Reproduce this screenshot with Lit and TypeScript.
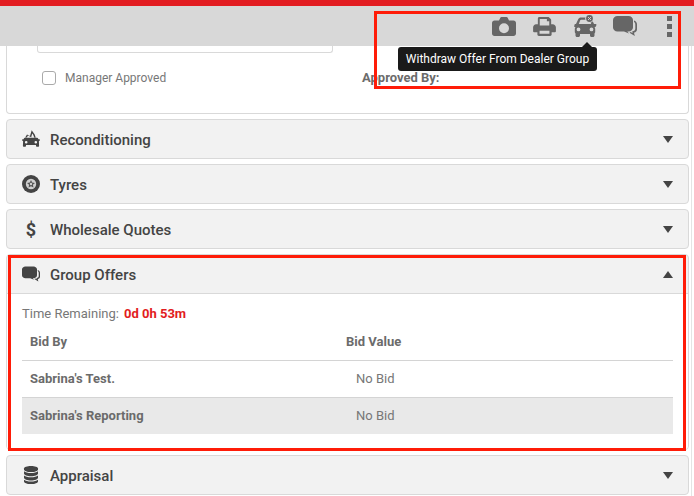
import { LitElement, html, css, svg } from "lit";
import { customElement } from "lit/decorators.js";

const carBody = svg`<path d="M5 10 7.2 5.2C7.8 4 8.8 3.4 10 3.4h8c1.2 0 2.2.6 2.8 1.8L23 10h1.6c.6 0 1 .5.8 1l-.4 1.2c-.1.4-.5.7-.9.7h-.6c.5.6.7 1.2.7 2v3.2c0 .6-.3 1.100-.7 1.500V21.500c0 .8-.7 1.500-1.500 1.500h-1.500c-.8 0-1.500-.7-1.500-1.500V20H9v1.500c0 .8-.7 1.500-1.500 1.500H6c-.8 0-1.500-.7-1.500-1.500v-2.100c-.4-.4-.7-.9-.7-1.500V14.900c0-.8.200-1.400.7-2h-.6c-.4 0-.8-.3-.9-.7L3.600 11c-.2-.5.2-1 .8-1ZM7.800 10h12.400L18.800 6.300c-.2-.4-.5-.6-.9-.6h-7.800c-.4 0-.7.2-.9.6ZM7.500 13.500a1.900 1.900 0 1 0 0 3.800 1.900 1.900 0 0 0 0-3.800Zm13 0a1.900 1.900 0 1 0 0 3.800 1.900 1.900 0 0 0 0-3.800Z" fill-rule="evenodd"/>`;

const commentPaths = svg`
  <path d="M4.500 0h11C18 0 20 1.800 20 4v7.500c0 2.200-2 4-4.500 4h-1.200l1.700 2-5-2H4.500C2 15.500 0 13.700 0 11.500V4C0 1.800 2 0 4.500 0Z"/>
  <path d="M21 4.500c1.800.5 3 2 3 3.900v4.800c0 1.900-1.200 3.200-3 3.500l.8 3.300-5.300-3.200 1-.9 2.100 1.200-.3-1.900c2 0 3-.9 3-2.600V8.400c0-1.100-.6-1.900-1.300-2.300Z"/>`;

const icons = {
  camera: html`<svg class="ti cam" viewBox="0 0 24 19"><path fill-rule="evenodd" d="M2.500 3.500H7L8.200.9C8.400.4 8.900 0 9.500 0h5c.6 0 1.100.4 1.300.9L17 3.500h4.500C22.900 3.500 24 4.600 24 6v10.500c0 1.400-1.100 2.500-2.500 2.500h-19C1.100 19 0 17.900 0 16.500V6c0-1.400 1.100-2.500 2.500-2.500ZM12 6.200a5 5 0 1 0 0 10 5 5 0 0 0 0-10Z"/></svg>`,
  printer: html`<svg class="ti prn" viewBox="0 0 24 20"><path fill-rule="evenodd" d="M5 1.500C5 .7 5.700 0 6.500 0h9.300c.4 0 .8.200 1.100.4l1.700 1.800c.3.300.4.600.4 1V7.500h1.500C22.500 7.500 24 9 24 10.700v4.300c0 .6-.4 1-1 1h-3.500v2.500c0 .8-.7 1.500-1.500 1.500H6c-.8 0-1.500-.7-1.500-1.500V16H1c-.6 0-1-.4-1-1v-4.300C0 9 1.500 7.500 3.200 7.500H5ZM7 2v7h10V4.500h-2.500V2ZM6.800 14.500v3h10.400v-3Z"/></svg>`,
  car: html`<svg class="ti car" viewBox="0 0 24 22"><g transform="translate(-2 -1)">${carBody}</g><circle cx="16.500" cy="3.500" r="4.300" fill="#d8d8d8"/><circle cx="16.500" cy="3.500" r="3.400" fill="#666"/><path d="m15 2 3 3m0-3-3 3" stroke="#d8d8d8" stroke-width=".9"/></svg>`,
  comments: html`<svg class="ti com" viewBox="0 0 24 20">${commentPaths}</svg>`,
  recon: html`<svg class="ai" viewBox="0 0 18 18"><path fill-rule="evenodd" d="M3.200 7.500 5 4.600l3 1.500L9.700.3l3 4.300 1 2.900h-1.500l-1-2.700-1-1.300-1 3.800-3.300-1.700-.9 1.700ZM3 7.800h12c.6 0 1 .3 1.100.7l.3.8h.9c.4 0 .7.400.6.800l-.3.600c-.1.300-.4.500-.7.500l.2 4.500c0 .6-.4 1-1 1h-1.100c-.5 0-1-.4-1-1v-.6H4v.6c0 .6-.5 1-1 1H1.900c-.6 0-1-.4-1-1l.2-4.500c-.3 0-.6-.2-.7-.5l-.3-.6c-.1-.4.2-.8.6-.8h.9l.3-.8c.1-.4.500-.7 1.100-.7ZM4.200 11a1.300 1.300 0 1 0 0 2.600 1.300 1.300 0 0 0 0-2.600Zm9.600 0a1.300 1.300 0 1 0 0 2.600 1.300 1.300 0 0 0 0-2.600Z"/></svg>`,
  tyre: html`<svg class="ai" viewBox="0 0 18 18"><circle cx="9" cy="9" r="9"/><circle cx="9" cy="9" r="5.200" fill="#cfcfcf"/><path d="m9 5 1.200 2.600 2.800.3-2.100 1.900.6 2.800L9 11.200l-2.500 1.400.6-2.800L5 7.900l2.800-.3Z" fill="#555"/><circle cx="9" cy="9" r="1.200" fill="#cfcfcf"/></svg>`,
  dollar: html`<svg class="ai" viewBox="0 0 18 18"><text class="dollar" x="9" y="15.500" text-anchor="middle">$</text></svg>`,
  comments2: html`<svg class="ai" viewBox="0 0 24 20">${commentPaths}</svg>`,
  db: html`<svg class="ai" viewBox="0 0 18 18"><path d="M9 0c3.900 0 7 1.100 7 2.600v.9C16 5 12.900 6.100 9 6.100S2 5 2 3.500v-.9C2 1.100 5.100 0 9 0Z"/><path d="M2 5.300C3.400 6.500 6 7.100 9 7.100s5.600-.6 7-1.800v2.300c0 1.500-3.100 2.700-7 2.700S2 9.100 2 7.600Z"/><path d="M2 9.500c1.400 1.200 4 1.800 7 1.800s5.600-.6 7-1.800v2.300c0 1.500-3.100 2.700-7 2.700s-7-1.200-7-2.700Z"/><path d="M2 13.700c1.400 1.200 4 1.800 7 1.800s5.600-.6 7-1.800v1.700C16 16.900 12.900 18 9 18s-7-1.100-7-2.600Z"/></svg>`,
};

@customElement("app-root")
export class AppRoot extends LitElement {
  static styles = css`
    :host {
      display: block;
      width: 694px;
      height: 496px;
      position: relative;
      overflow: hidden;
      background: #fff;
      font-family: Roboto, sans-serif;
      color: #666;
      font-size: 13px;
    }
    .red { height: 6px; background: #e21c21; }
    .bar {
      height: 40px;
      background: #d8d8d8;
      display: flex;
      align-items: center;
      justify-content: flex-end;
      padding-right: 22px;
      box-sizing: border-box;
    }
    .ti { fill: #666; display: block; }
    .cam { width: 24px; height: 19px; margin-right: 17px; }
    .prn { width: 23px; height: 19px; margin-right: 17px; }
    .car { width: 24px; height: 22px; margin-right: 16px; }
    .com { width: 24px; height: 20px; margin-right: 30px; }
    .dots { display: flex; flex-direction: column; gap: 3px; margin-top: 1px; }
    .dots i { display: block; width: 5px; height: 5px; background: #666; }
    .content {
      display: flex;
      flex-direction: column;
      gap: 5px;
      padding: 0 2px 0 6px;
      border-right: 1px solid #e4e4e4;
      margin-right: 2px;
      height: 450px;
      box-sizing: border-box;
    }
    .top {
      height: 68px;
      flex: none;
      box-sizing: border-box;
      border: 1px solid #d9d9d9;
      border-top: 0;
      border-radius: 0 0 4px 4px;
      padding: 0 0 0 30px;
    }
    .input {
      width: 296px;
      height: 6.500px;
      box-sizing: border-box;
      border: 1px solid #d9d9d9;
      border-top: 0;
      border-radius: 0 0 3px 3px;
    }
    .approve {
      display: flex;
      align-items: center;
      height: 14px;
      margin-top: 18px;
      padding-left: 5px;
    }
    .check {
      width: 14px;
      height: 14px;
      box-sizing: border-box;
      border: 1px solid #aaa;
      border-radius: 3px;
      margin-right: 9px;
    }
    .mgr { width: 297px; color: #777; font-size: 12px; }
    .by { font-weight: 700; color: #6b6b6b; font-size: 13px; }
    .panel {
      flex: none;
      border: 1px solid #d9d9d9;
      border-radius: 4px;
      background: #f2f2f2;
      box-sizing: border-box;
      overflow: hidden;
    }
    .head {
      height: 38px;
      display: flex;
      align-items: center;
      padding: 0 15px;
      box-sizing: border-box;
      font-size: 15px;
      font-weight: 500;
      color: #444;
    }
    .ai { width: 18px; height: 18px; fill: #444; margin-right: 10px; flex: none; display: block; }
    .dollar { font: 700 18px Roboto, sans-serif; fill: #444; }
    .name { flex: 1; padding-top: 1px; }
    .tri {
      width: 0; height: 0;
      border-left: 5.500px solid transparent;
      border-right: 5.500px solid transparent;
      border-top: 7px solid #444;
    }
    .tri.up { border-top: 0; border-bottom: 7px solid #444; }
    .open .head { border-bottom: 1px solid #d9d9d9; height: 39px; }
    .body {
      background: #fff;
      padding: 0 15px;
      height: 155px;
      box-sizing: border-box;
    }
    .time {
      height: 38px;
      display: flex;
      align-items: center;
      gap: 5px;
      color: #777;
    }
    .time b { color: #e21c21; font-weight: 700; }
    .row {
      display: grid;
      grid-template-columns: 316px 1fr;
      align-items: center;
      padding: 0 0 1px 8px;
      height: 37px;
      box-sizing: border-box;
      border-bottom: 1px solid #d4d4d4;
      font-size: 13px;
      font-weight: 700;
      color: #6b6b6b;
    }
    .row span:last-child { padding-left: 10px; font-weight: 400; color: #777; }
    .row.th { height: 29px; padding-bottom: 9px; }
    .row.th span:last-child { padding-left: 0; font-weight: 700; color: #6b6b6b; }
    .row.alt { background: #e9e9e9; border-bottom: 0; height: 36px; }
    .note { position: absolute; border: 3px solid #ff1c08; box-sizing: border-box; pointer-events: none; }
    .n1 { left: 374px; top: 11px; width: 307px; height: 78px; }
    .n2 { left: 8px; top: 255px; width: 678px; height: 196px; }
    .tip {
      position: absolute;
      left: 398px;
      top: 47px;
      width: 199px;
      height: 24px;
      background: #1a1a1a;
      border-radius: 3px;
      color: #fff;
      font-size: 12px;
      line-height: 24px;
      text-align: center;
    }
    .tip::before {
      content: "";
      position: absolute;
      left: 184px;
      top: -5px;
      border-left: 5px solid transparent;
      border-right: 5px solid transparent;
      border-bottom: 5px solid #1a1a1a;
    }
  `;

  private panel(icon: unknown, name: string) {
    return html`<div class="panel">
      <div class="head">${icon}<span class="name">${name}</span><i class="tri"></i></div>
    </div>`;
  }

  render() {
    return html`
      <div class="red"></div>
      <div class="bar">
        ${icons.camera}${icons.printer}${icons.car}${icons.comments}
        <div class="dots"><i></i><i></i><i></i></div>
      </div>
      <div class="content">
        <div class="top">
          <div class="input"></div>
          <div class="approve">
            <div class="check"></div>
            <span class="mgr">Manager Approved</span>
            <span class="by">Approved By:</span>
          </div>
        </div>
        ${this.panel(icons.recon, "Reconditioning")}
        ${this.panel(icons.tyre, "Tyres")}
        ${this.panel(icons.dollar, "Wholesale Quotes")}
        <div class="panel open">
          <div class="head">${icons.comments2}<span class="name">Group Offers</span><i class="tri up"></i></div>
          <div class="body">
            <div class="time"><span>Time Remaining:</span><b>0d 0h 53m</b></div>
            <div class="row th"><span>Bid By</span><span>Bid Value</span></div>
            <div class="row"><span>Sabrina's Test.</span><span>No Bid</span></div>
            <div class="row alt"><span>Sabrina's Reporting</span><span>No Bid</span></div>
          </div>
        </div>
        ${this.panel(icons.db, "Appraisal")}
      </div>
      <div class="note n1"></div>
      <div class="note n2"></div>
      <div class="tip">Withdraw Offer From Dealer Group</div>
    `;
  }
}
